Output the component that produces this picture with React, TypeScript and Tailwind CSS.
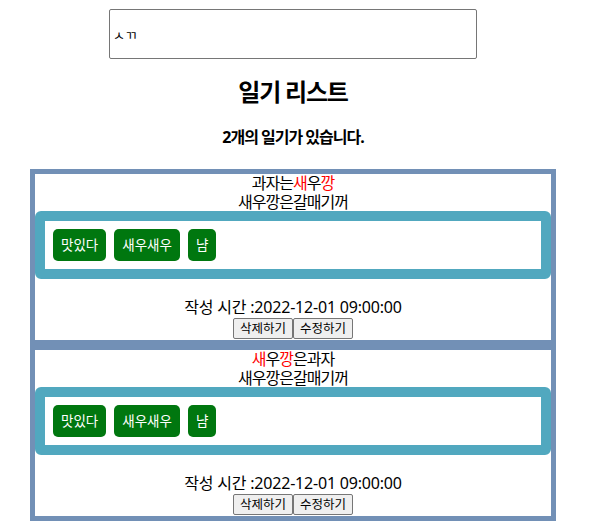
import React from "react";

const tags = ["맛있다", "새우새우", "냠"];

function Item({ first }: { first: React.ReactNode }) {
  return (
    <div className="border-[5px] border-[#7290b6] bg-white">
      <div className="text-[16px] leading-[18.5px] tracking-[-1px]">
        <div>{first}</div>
        <div>새우깡은갈매기꺼</div>
      </div>
      <div className="border-[10px] border-[#51a8bf] rounded-[6px] bg-white p-[8px] flex gap-[8px]">
        {tags.map((t) => (
          <span
            key={t}
            className="h-[32px] px-[8px] flex items-center rounded-[5px] bg-[#00770f] text-white text-[13.5px]"
          >
            {t}
          </span>
        ))}
      </div>
      <div className="mt-[17px] h-[22px] leading-[22px] text-[16px] tracking-[-0.2px]">
        작성 시간 :2022-12-01 09:00:00
      </div>
      <div className="h-[22px] flex justify-center items-start">
        <button className="h-[21px] px-[6px] text-[12.5px] leading-[19px] bg-[#efefef] border border-[#767676] rounded-[2px] text-black">
          삭제하기
        </button>
        <button className="h-[21px] px-[6px] text-[12.5px] leading-[19px] bg-[#efefef] border border-[#767676] rounded-[2px] text-black">
          수정하기
        </button>
      </div>
    </div>
  );
}

export default function App() {
  return (
    <div
      className="w-[586px] text-center text-black bg-white"
      style={{ fontFamily: '"Noto Sans", "Noto Sans CJK KR", sans-serif' }}
    >
      <div className="pt-[9px] flex justify-center">
        <input
          readOnly
          value="ㅅㄲ"
          className="w-[368px] h-[50px] border border-[#767676] rounded-[2px] px-[3px] text-[13px] text-black outline-none"
        />
      </div>
      <h2 className="mt-[19px] text-[24px] leading-[28px] font-bold tracking-[-1.2px]">일기 리스트</h2>
      <h4 className="mt-[21px] text-[16px] leading-[20px] font-bold tracking-[-1px]">2개의 일기가 있습니다.</h4>
      <div className="mt-[22px] w-[526px] ml-[30px]">
        <Item
          first={
            <>
              과자는<span className="text-[#ff0000]">새</span>우<span className="text-[#ff0000]">깡</span>
            </>
          }
        />
        <Item
          first={
            <>
              <span className="text-[#ff0000]">새</span>우<span className="text-[#ff0000]">깡</span>은과자
            </>
          }
        />
      </div>
    </div>
  );
}
